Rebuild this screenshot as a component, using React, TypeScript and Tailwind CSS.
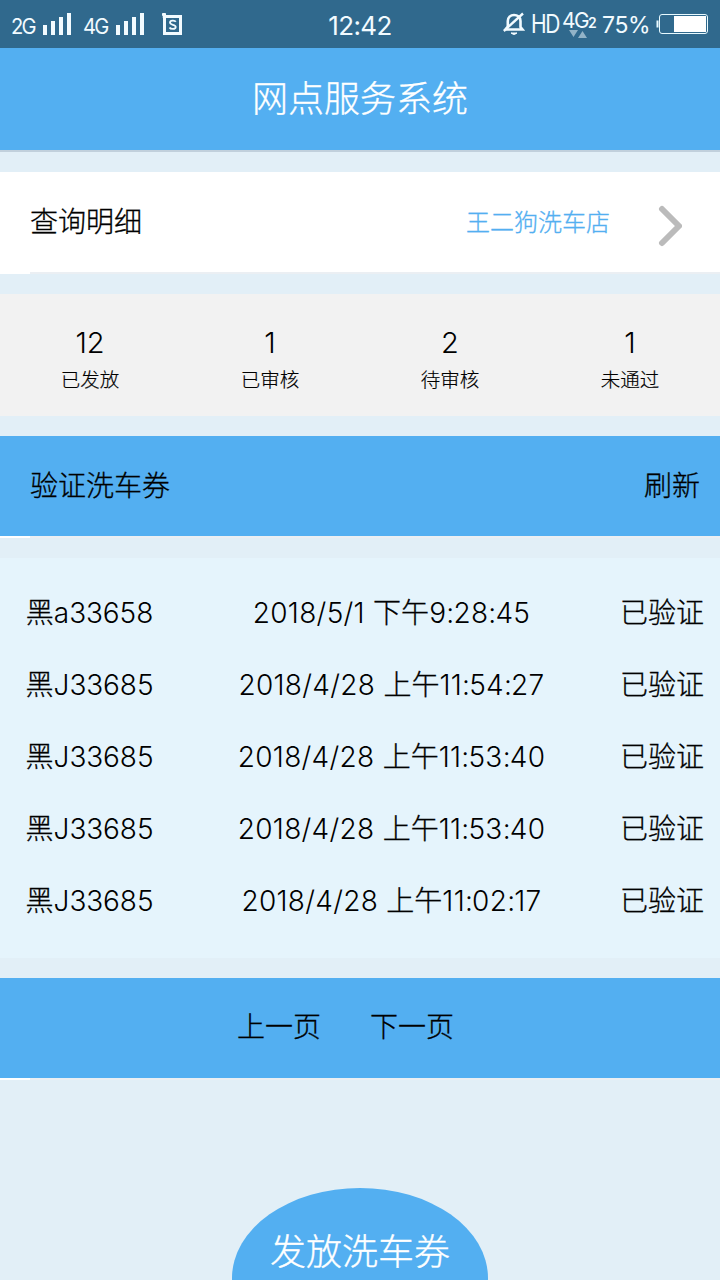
import React from "react";

const stats = [
  { value: "12", label: "已发放" },
  { value: "1", label: "已审核" },
  { value: "2", label: "待审核" },
  { value: "1", label: "未通过" },
];

const records = [
  { plate: "a33658", date: "2018/5/1", period: "下午", time: "9:28:45" },
  { plate: "J33685", date: "2018/4/28", period: "上午", time: "11:54:27" },
  { plate: "J33685", date: "2018/4/28", period: "上午", time: "11:53:40" },
  { plate: "J33685", date: "2018/4/28", period: "上午", time: "11:53:40" },
  { plate: "J33685", date: "2018/4/28", period: "上午", time: "11:02:17" },
];

function Signal() {
  return (
    <svg width="29" height="22" viewBox="0 0 29 22" fill="currentColor" className="block">
      <rect x="0" y="12" width="4" height="10" />
      <rect x="8" y="8" width="4" height="14" />
      <rect x="16" y="4" width="4" height="18" />
      <rect x="24" y="0" width="4" height="22" />
    </svg>
  );
}

function StatusBar() {
  return (
    <header className="flex h-12 shrink-0 items-start bg-[#30698d] font-normal text-[#f2fbff]">
      <div className="flex w-[320px] pl-[11px]">
        <span className="mt-[15px] w-8 text-[21px] leading-6 tracking-[-1.8px]">
          <span className="inline-block origin-left scale-x-[0.96]">2G</span>
        </span>
        <div className="mt-[13px] w-10"><Signal /></div>
        <span className="mt-[15px] w-[33px] text-[21px] leading-6 tracking-[-1.8px]">
          <span className="inline-block origin-left scale-x-[0.96]">4G</span>
        </span>
        <div className="mt-[13px] w-[46px]"><Signal /></div>
        <svg width="21" height="22" viewBox="0 0 21 22" fill="none" stroke="currentColor" className="mt-[13px]">
          <path d="M2.5 3.5H18.5V20.5H2.5Z" strokeWidth="3" />
          <path d="M0 1.5H4M2 0V5" strokeWidth="2.5" />
          <path d="M13.8 8.7C12.8 7.2 8 7 8 9.6C8 12.6 13.7 11 13.7 14C13.7 16.7 8.4 16.3 7.5 14.5" strokeWidth="1.8" />
        </svg>
      </div>
      <div className="mt-3 w-20 text-center text-[26px] leading-7 tracking-[-0.6px]">12:42</div>
      <div className="flex flex-1 pl-[103px]">
        <svg width="22" height="24" viewBox="0 0 22 24" fill="none" stroke="currentColor" strokeWidth="2.6" className="mt-3">
          <path d="M2.5 17.5H19.5L17.5 15V9C17.5 5 14.5 3 11 3S4.8 5.4 4.8 9V14.5L2.5 17.5" />
          <path d="M0.8 19L20 1.5" strokeWidth="2.4" />
          <path d="M8 21Q11 24 14 21Z" fill="currentColor" strokeWidth="1" />
        </svg>
        <span className="ml-1.5 mt-3 w-[31px] text-[25px] font-normal leading-6 tracking-[-1.5px]">
          <span className="inline-block origin-left scale-x-[0.84]">HD</span>
        </span>
        <div className="mt-2 w-[40px] leading-6">
          <div className="flex h-[22px]">
            <span className="w-[26px] text-[22px] leading-6 tracking-[-1.6px]">
              <span className="inline-block origin-left scale-x-[0.95]">4G</span>
            </span>
            <span className="pt-[3px] text-[14px] font-semibold leading-6">2</span>
          </div>
          <svg width="20" height="9" viewBox="0 0 20 9" className="ml-[7px] block" fill="#92b3c7">
            <path d="M0 0H9L4.5 7Z M9 8L13.5 1L18 8Z" />
          </svg>
        </div>
        <span className="mt-[11px] w-[54px] text-[23px] leading-7 tracking-[-0.4px]">75%</span>
        <svg width="53" height="22" viewBox="0 0 53 22" className="mt-[13px]">
          <path d="M1.5 7.5V14.5" fill="none" stroke="#e8faff" strokeWidth="2" />
          <rect x="3.5" y="1.5" width="48" height="19" rx="2.5" fill="none" stroke="#e8faff" />
          <rect x="18" y="3" width="32" height="16" fill="white" />
        </svg>
      </div>
    </header>
  );
}

function RowEdge() {
  return (
    <div className="flex h-0.5">
      <div className="w-[30px] bg-white" />
      <div className="flex-1 bg-[#ebeff3]" />
    </div>
  );
}

function Time({ value }: { value: string }) {
  return (
    <span className="tracking-[0.3px]">
      {value.split(":").map((part, index) => (
        <React.Fragment key={index}>
          {index > 0 && <span className="tracking-[-0.8px]">:</span>}
          {part}
        </React.Fragment>
      ))}
    </span>
  );
}

export default function App() {
  return (
    <main className="flex h-[1280px] w-[720px] flex-col overflow-hidden bg-[#e2eff7] font-['Inter','Noto_Sans_CJK_SC',sans-serif] text-[28px] font-light text-black">
      <StatusBar />
      <h1 className="h-[104px] shrink-0 border-b-2 border-[#c1d0dc] bg-[#53aff1] text-center text-[36px] leading-[102px] text-white [-webkit-text-stroke:0.35px]">
        网点服务系统
      </h1>

      <section className="mt-5 shrink-0">
        <div className="flex h-[100px] items-center bg-white pl-[30px]">
          <span className="flex-1 [-webkit-text-stroke:0.3px]">查询明细</span>
          <span className="pt-0.5 text-2xl text-[#53aff1] [-webkit-text-stroke:0.3px]">王二狗洗车店</span>
          <svg width="24" height="42" viewBox="0 0 24 42" className="ml-12 mr-[38px] mt-2" fill="none">
            <path d="M4 4L21 21L4 38" stroke="#bbb" strokeWidth="6" strokeLinecap="round" strokeLinejoin="round" />
          </svg>
        </div>
        <RowEdge />
      </section>

      <section className="mt-5 grid h-[122px] shrink-0 grid-cols-4 bg-[#f2f2f2] pt-8 text-center">
        {stats.map((stat) => (
          <div key={stat.label}>
            <div className="h-9 text-[29px] leading-[34px]">{stat.value}</div>
            <div className="text-[19.5px] leading-9 [-webkit-text-stroke:0.2px]">{stat.label}</div>
          </div>
        ))}
      </section>

      <section className="mt-5 shrink-0">
        <div className="flex h-[100px] items-center justify-between bg-[#53aff1] pl-[30px] pr-5 [-webkit-text-stroke:0.3px]">
          <span>验证洗车券</span>
          <button>刷新</button>
        </div>
        <RowEdge />
      </section>

      <section className="mt-5 h-[400px] shrink-0 bg-[#e5f4fc] py-[19px]">
        {records.map((record, index) => (
          <div key={index} className="flex h-[72px] items-center whitespace-nowrap [font-kerning:none]">
            <div className="w-[179px] text-center">
              <span className="[-webkit-text-stroke:0.3px]">黑</span>
              <span className="tracking-[-0.1px]">{record.plate}</span>
            </div>
            <div className="w-[425px] text-center">
              <span className="tracking-[0.3px]">{record.date} </span>
              <span className="[-webkit-text-stroke:0.3px]">{record.period}</span>
              <Time value={record.time} />
            </div>
            <div className="w-[116px] text-center [-webkit-text-stroke:0.3px]">已验证</div>
          </div>
        ))}
      </section>

      <section className="mt-5 shrink-0">
        <div className="flex h-[100px] items-center gap-[49px] bg-[#53aff1] pb-[3px] pl-[237px] [-webkit-text-stroke:0.3px]">
          <button>上一页</button>
          <button>下一页</button>
        </div>
        <RowEdge />
      </section>

      <button className="mx-auto mt-[108px] h-[180px] w-64 shrink-0 rounded-[50%] bg-[#53aff1] pb-[52px] text-[36px] text-white [-webkit-text-stroke:0.35px]">
        发放洗车券
      </button>
    </main>
  );
}
